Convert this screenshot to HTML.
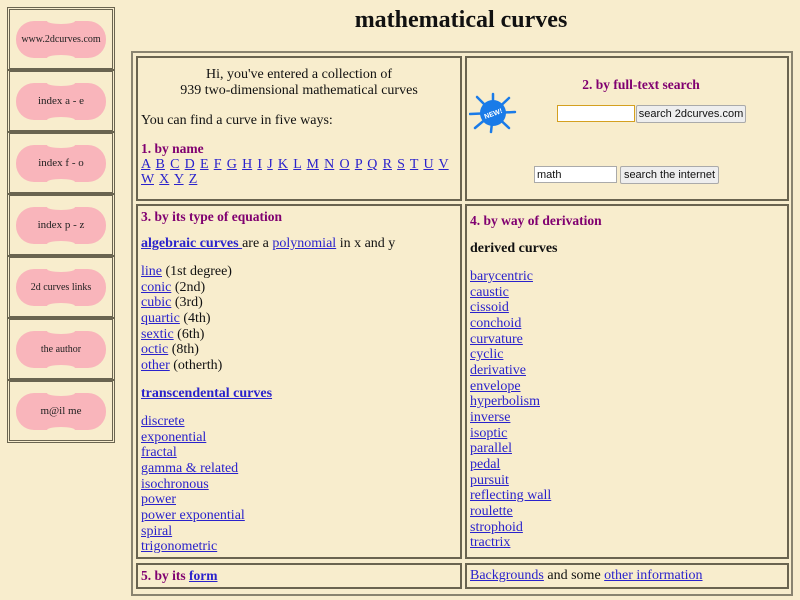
<!DOCTYPE html>
<html><head><meta charset="utf-8"><style>
body{margin:0;width:800px;height:600px;background:#f8edcd;font-family:"Liberation Serif",serif;font-size:14px;color:#111;position:relative;overflow:hidden}
a{color:#2a22cc;text-decoration:underline}
.abs{position:absolute}
.nav{position:absolute;left:7px;width:102px;height:58px;border:3px double #6a6450}
.blob{position:absolute;left:6px;top:11px;width:90px;height:37px;background:#f9b5bb;border-radius:18px/18px;font-size:11px;text-align:center;line-height:37px;color:#222}
.blob:before{content:"";position:absolute;left:31px;top:-3px;width:28px;height:6px;background:#f8edcd;border-radius:50%}
.blob:after{content:"";position:absolute;left:31px;bottom:-3px;width:28px;height:6px;background:#f8edcd;border-radius:50%}
.cell{position:absolute;border:2px solid #6a6450;box-sizing:border-box}
h2{margin:0;font-size:13.5px;color:#800070;font-weight:bold;word-spacing:0}
.ln{line-height:15.65px}
.inp{position:absolute;background:#fff;border:1px solid #aaa;box-sizing:border-box;font-family:"Liberation Sans",sans-serif;font-size:11px;padding-left:2px;line-height:16px}
.btn{position:absolute;background:#eee;border:1px solid #aaa;border-radius:2px;box-sizing:border-box;font-family:"Liberation Sans",sans-serif;font-size:11px;text-align:center;line-height:16px;color:#111}
</style></head><body>
<div class="abs" style="left:131px;top:51px;width:658px;height:541px;border:2px solid #8a8470"></div>
<div class="abs" style="left:131px;top:7px;width:660px;text-align:center;font-size:24px;font-weight:bold">mathematical curves</div>

<div class="nav" style="top:7px"><div class="blob" style="font-size:10px">www.2dcurves.com</div></div>
<div class="nav" style="top:69px"><div class="blob">index a - e</div></div>
<div class="nav" style="top:131px"><div class="blob">index f - o</div></div>
<div class="nav" style="top:193px"><div class="blob">index p - z</div></div>
<div class="nav" style="top:255px"><div class="blob" style="font-size:10px">2d curves links</div></div>
<div class="nav" style="top:317px"><div class="blob" style="font-size:10px">the author</div></div>
<div class="nav" style="top:379px"><div class="blob">m@il me</div></div>

<div class="cell" style="left:136px;top:56px;width:326px;height:145px"></div>
<div class="cell" style="left:465px;top:56px;width:324px;height:145px"></div>
<div class="cell" style="left:136px;top:204px;width:326px;height:355px"></div>
<div class="cell" style="left:465px;top:204px;width:324px;height:355px"></div>
<div class="cell" style="left:136px;top:563px;width:326px;height:26px"></div>
<div class="cell" style="left:465px;top:563px;width:324px;height:26px"></div>

<div class="abs ln" style="left:136px;top:67px;width:326px;text-align:center">Hi, you've entered a collection of<br>939 two-dimensional mathematical curves</div>
<div class="abs" style="left:141px;top:113px">You can find a curve in five ways:</div>
<div class="abs ln" style="left:141px;top:141px;width:320px;word-spacing:1.7px;white-space:nowrap"><h2>1. by name</h2>
<a>A</a> <a>B</a> <a>C</a> <a>D</a> <a>E</a> <a>F</a> <a>G</a> <a>H</a> <a>I</a> <a>J</a> <a>K</a> <a>L</a> <a>M</a> <a>N</a> <a>O</a> <a>P</a> <a>Q</a> <a>R</a> <a>S</a> <a>T</a> <a>U</a> <a>V</a><br><a>W</a> <a>X</a> <a>Y</a> <a>Z</a></div>

<svg class="abs" style="left:469px;top:92px" width="48" height="42" viewBox="0 0 48 42"><g stroke="#1a7be8" stroke-width="2.5" stroke-linecap="round"><line x1="24" y1="21" x2="24" y2="2"/><line x1="24" y1="21" x2="40" y2="6"/><line x1="24" y1="21" x2="46" y2="20"/><line x1="24" y1="21" x2="40" y2="36"/><line x1="24" y1="21" x2="22" y2="40"/><line x1="24" y1="21" x2="6" y2="36"/><line x1="24" y1="21" x2="1" y2="22"/><line x1="24" y1="21" x2="8" y2="5"/></g><circle cx="24" cy="21" r="13" fill="#1a7be8"/><text x="24" y="24" font-size="7" fill="#fff" text-anchor="middle" font-family="Liberation Sans" font-weight="bold" transform="rotate(-20 24 21)">NEW!</text></svg>
<div class="abs" style="left:465px;top:77px;width:324px;text-align:center;padding-left:28px;box-sizing:border-box"><h2>2. by full-text search</h2></div>
<div class="inp" style="left:557px;top:105px;width:78px;height:17px;border-color:#d4a020"></div>
<div class="btn" style="left:636px;top:105px;width:110px;height:18px">search 2dcurves.com</div>
<div class="inp" style="left:534px;top:166px;width:83px;height:17px">math</div>
<div class="btn" style="left:620px;top:166px;width:99px;height:18px">search the internet</div>

<div class="abs ln" style="left:141px;top:209px"><h2>3. by its type of equation</h2></div>
<div class="abs ln" style="left:141px;top:236px"><a style="font-weight:bold">algebraic curves </a>are a <a>polynomial</a> in x and y</div>
<div class="abs ln" style="left:141px;top:264px"><a>line</a> (1st degree)<br><a>conic</a> (2nd)<br><a>cubic</a> (3rd)<br><a>quartic</a> (4th)<br><a>sextic</a> (6th)<br><a>octic</a> (8th)<br><a>other</a> (otherth)</div>
<div class="abs ln" style="left:141px;top:386px"><a style="font-weight:bold">transcendental curves</a></div>
<div class="abs ln" style="left:141px;top:414px"><a>discrete</a><br><a>exponential</a><br><a>fractal</a><br><a>gamma &amp; related</a><br><a>isochronous</a><br><a>power</a><br><a>power exponential</a><br><a>spiral</a><br><a>trigonometric</a></div>

<div class="abs ln" style="left:470px;top:213px"><h2>4. by way of derivation</h2></div>
<div class="abs ln" style="left:470px;top:241px;font-weight:bold">derived curves</div>
<div class="abs ln" style="left:470px;top:269px"><a>barycentric</a><br><a>caustic</a><br><a>cissoid</a><br><a>conchoid</a><br><a>curvature</a><br><a>cyclic</a><br><a>derivative</a><br><a>envelope</a><br><a>hyperbolism</a><br><a>inverse</a><br><a>isoptic</a><br><a>parallel</a><br><a>pedal</a><br><a>pursuit</a><br><a>reflecting wall</a><br><a>roulette</a><br><a>strophoid</a><br><a>tractrix</a></div>

<div class="abs ln" style="left:141px;top:568px"><h2>5. by its <a>form</a></h2></div>
<div class="abs ln" style="left:470px;top:568px"><a>Backgrounds</a> and some <a>other information</a></div>
</body></html>
